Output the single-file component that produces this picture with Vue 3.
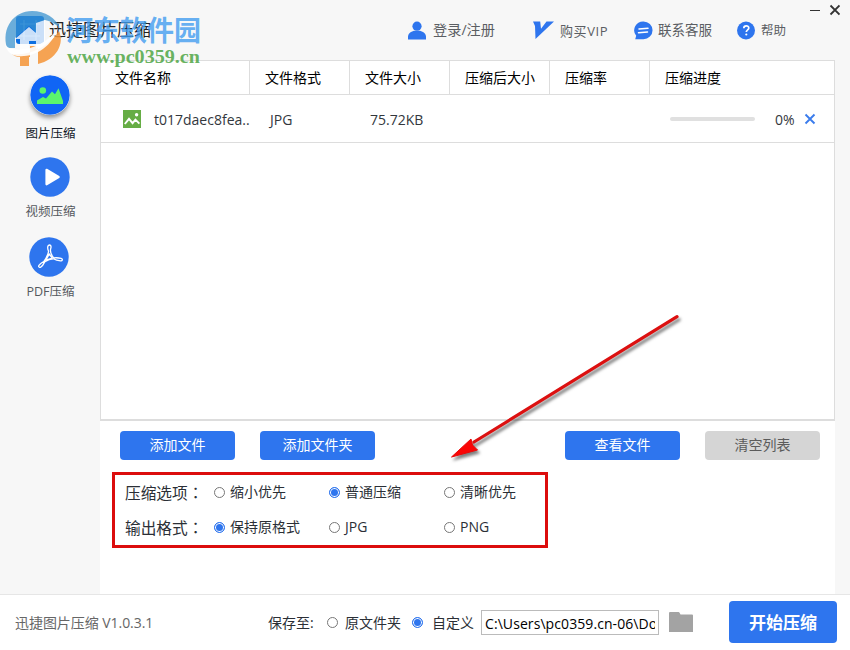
<script setup>
import { ref } from 'vue'

const columns = ['文件名称', '文件格式', '文件大小', '压缩后大小', '压缩率', '压缩进度']

const files = ref([
  { name: 't017daec8fea..', format: 'JPG', size: '75.72KB', result: '', ratio: '', progress: 0 },
])

const levels = ['缩小优先', '普通压缩', '清晰优先']
const formats = ['保持原格式', 'JPG', 'PNG']
const level = ref('普通压缩')
const format = ref('保持原格式')
const saveTo = ref('custom')
const path = ref('C:\\Users\\pc0359.cn-06\\Documents')

const removeFile = (index) => {
  files.value.splice(index, 1)
}

const clearList = () => {
  files.value = []
}
</script>

<template>
  <div class="window">
    <header class="header">
      <div class="brand">
        <svg class="app-logo" width="28" height="28" viewBox="0 0 28 28">
          <rect width="28" height="28" rx="3" fill="#0f6fe0" />
          <path d="M4 8h20M4 20h20M8 4v20M20 4v20" stroke="#4f9df0" stroke-width="1.2" />
        </svg>
        <span class="title">迅捷图片压缩</span>
      </div>
      <nav class="links">
        <a class="link login">
          <svg width="18" height="19" viewBox="0 0 18 19" fill="#2e75ee">
            <circle cx="9" cy="5.200" r="4.600" />
            <path d="M0 18.500v-2.500c0-3.500 2.500-5 6-6.200h6c3.500 1.200 6 2.700 6 6.200v2.500z" />
          </svg>
          <span>登录/注册</span>
        </a>
        <a class="link vip">
          <svg width="21" height="19" viewBox="0 0 21 19" fill="#2e75ee">
            <path d="M0 .5h7.200l.8 7.300L13.500.5H21L2.500 18 2 5z" />
          </svg>
          <span>购买VIP</span>
        </a>
        <a class="link service">
          <svg width="19" height="19" viewBox="0 0 19 19">
            <path d="M9.500.5a9 8.800 0 1 1 0 17.700H1.200l1-3.400A9 8.800 0 0 1 9.500.5z" fill="#2e75ee" />
            <path d="M5 8l9-.8M4.500 11.800l9-.8" stroke="#fff" stroke-width="1.500" stroke-linecap="round" />
          </svg>
          <span>联系客服</span>
        </a>
        <a class="link help">
          <svg width="19" height="19" viewBox="0 0 19 19">
            <circle cx="9" cy="9.500" r="9" fill="#2e75ee" />
            <path d="M6.800 7.300c0-3.200 5-3.200 5-.2 0 1.800-2.500 1.900-2.500 4" fill="none" stroke="#fff" stroke-width="1.700" />
            <circle cx="9.300" cy="13.500" r="1.100" fill="#fff" />
          </svg>
          <span>帮助</span>
        </a>
      </nav>
      <div class="controls">
        <svg width="30" height="12" viewBox="0 0 30 12" stroke="#333" fill="none">
          <path d="M0 6.500h10" stroke-width="1" />
          <path d="M20.500 1.500l9 9M29.500 1.500l-9 9" stroke-width="1.800" />
        </svg>
      </div>
    </header>

    <div class="body">
      <aside class="sidebar">
        <a class="tool active">
          <svg width="40" height="40" viewBox="0 0 40 40">
            <circle cx="20" cy="20" r="19.700" fill="#1065f5" />
            <circle cx="12.800" cy="15.500" r="3.300" fill="#5bf56d" />
            <path d="M7 29v-3.500l6-3.500 3 1.500 6-7 3 2.800 3.500-6L33 26v3z" fill="#5bf56d" />
          </svg>
          <span>图片压缩</span>
        </a>
        <a class="tool">
          <svg width="40" height="40" viewBox="0 0 40 40">
            <circle cx="20" cy="20" r="19.700" fill="#2e75ee" />
            <path d="M16.500 12.800v14.500L28.700 20z" fill="#fff" stroke="#fff" stroke-width="2.200" stroke-linejoin="round" />
          </svg>
          <span>视频压缩</span>
        </a>
        <a class="tool pdf">
          <svg width="40" height="40" viewBox="0 0 40 40">
            <circle cx="20" cy="20" r="19.700" fill="#2e75ee" />
            <path
              d="M19.200 8.700c1.900-1.800 3.500.2 2.500 2.900-.8 3 .2 6 3 9.300 2.400-.3 5.200-.1 7.400.5 2.200.9 1.200 2.800-.6 2.400-2.600-.2-5.200-.9-7.200-2-3 .2-5.900 1.300-8.400 2.800-1.200 2.400-2.500 4.500-4.200 5.500-1.800 1-2.800-1-1.200-2.400 1.200-1.200 2.700-2.200 4.300-3 2.300-3.400 4.200-7.200 4.800-10.300-.9-2-1.300-4.200-.4-5.700zM20.300 17l-3.300 6 6.200-1.900z"
              fill="none"
              stroke="#fff"
              stroke-width="1.300"
              stroke-linejoin="round"
            />
          </svg>
          <span>PDF压缩</span>
        </a>
      </aside>

      <main class="main">
        <section class="table">
          <div class="row head">
            <div v-for="column in columns" :key="column" class="cell">{{ column }}</div>
          </div>
          <div v-for="(file, index) in files" :key="file.name" class="row item">
            <div class="cell name">
              <svg width="18" height="18" viewBox="0 0 18 18">
                <rect width="18" height="18" fill="#66ad45" />
                <path d="M1.800 14l4.200-5.200 3.600 4.400 2.800-3.500 4 4" fill="none" stroke="#fff" stroke-width="1.900" />
                <circle cx="13.600" cy="4.700" r="1.700" fill="#fff" />
              </svg>
              <span class="label">{{ file.name }}</span>
            </div>
            <div class="cell"><span class="label">{{ file.format }}</span></div>
            <div class="cell"><span class="label">{{ file.size }}</span></div>
            <div class="cell">{{ file.result }}</div>
            <div class="cell">{{ file.ratio }}</div>
            <div class="cell progress">
              <div class="track"><div class="fill" :style="{ width: file.progress + '%' }"></div></div>
              <span class="label percent">{{ file.progress }}%</span>
              <svg width="12" height="12" viewBox="0 0 12 12" @click="removeFile(index)">
                <path d="M1.500 1.500l9 9M10.500 1.500l-9 9" stroke="#3b7cec" stroke-width="1.900" />
              </svg>
            </div>
          </div>
        </section>

        <div class="buttons">
          <button>添加文件</button>
          <button>添加文件夹</button>
          <button class="view">查看文件</button>
          <button class="clear" @click="clearList">清空列表</button>
        </div>

        <div class="options">
          <div class="option-row">
            <span class="caption">压缩选项<span class="colon">：</span></span>
            <a v-for="item in levels" :key="item" class="choice" @click="level = item">
              <i class="radio" :class="{ on: level === item }"></i><span>{{ item }}</span>
            </a>
          </div>
          <div class="option-row">
            <span class="caption">输出格式<span class="colon">：</span></span>
            <a v-for="item in formats" :key="item" class="choice" @click="format = item">
              <i class="radio" :class="{ on: format === item }"></i><span>{{ item }}</span>
            </a>
          </div>
        </div>
      </main>
    </div>

    <footer class="footer">
      <span class="version">迅捷图片压缩 V1.0.3.1</span>
      <span class="save">保存至:</span>
      <a class="target" @click="saveTo = 'source'">
        <i class="radio" :class="{ on: saveTo === 'source' }"></i>原文件夹
      </a>
      <a class="target custom" @click="saveTo = 'custom'">
        <i class="radio" :class="{ on: saveTo === 'custom' }"></i>自定义
      </a>
      <input v-model="path" class="path" type="text" />
      <svg class="folder" width="24" height="20" viewBox="0 0 24 20">
        <path d="M0 1q0-1 1-1h8.500q.8 0 1.200 1l.8 1.500H23q1 0 1 1V20H0z" fill="#a3a3a3" />
      </svg>
      <button class="start">开始压缩</button>
    </footer>

    <!-- site mark over the title bar -->
    <svg class="watermark" width="210" height="72" viewBox="0 0 210 72">
      <path d="M7 48C1 28 14 11 32 11c13 0 24 7 28 17-6-5-10-7-15-8l-9 4v8l-7-6-14 12v10z" fill="#3590cf" fill-opacity="0.72" />
      <path d="M12 54c16 2 36-6 47-23 6 13-3 29-21 33V46h-8v11h-1v9h-9v-9q-5 0-8-3z" fill="#f49436" fill-opacity="0.85" />
      <path d="M5 44c5 10 37 8 53-16-6 19-24 30-41 28-6-1-11-5-12-12z" fill="#fff" fill-opacity="0.9" />
      <path d="M15 39l14-12 7 6V23l9-3v24l-9 5v-8h-7v9l-9 1V39z" fill="#fff" fill-opacity="0.78" />
      <text class="mark-name" x="66" y="40.500" textLength="135" lengthAdjust="spacingAndGlyphs">河东软件园</text>
      <text class="mark-url" x="67" y="63" textLength="133" lengthAdjust="spacingAndGlyphs">www.pc0359.cn</text>
    </svg>

    <!-- highlight frame and pointer -->
    <div class="frame"></div>
    <svg class="arrow" width="250" height="170" viewBox="0 0 250 170">
      <path d="M237 16.700L34 142" stroke="#dc1010" stroke-width="3.200" stroke-linecap="round" />
      <path d="M11.500 157L31 139l1.500 6 5 5z" fill="#fa0505" stroke="#e80909" stroke-width="1" />
    </svg>
  </div>
</template>

<style>
body {
  margin: 0;
  overflow: hidden;
}
</style>

<style scoped>
.window {
  position: relative;
  display: flex;
  flex-direction: column;
  width: 850px;
  height: 650px;
  overflow: hidden;
  background: #f7f7f7;
  color: #2b2f36;
  font-family: "Open Sans", "Noto Sans CJK SC", sans-serif;
  font-size: 14px;
  line-height: 20px;
  white-space: nowrap;
}

button {
  padding: 0;
  border: 0;
  border-radius: 4px;
  background: #2e75ee;
  color: #fff;
  font-family: inherit;
}

svg {
  display: block;
  flex: none;
}

.header {
  display: flex;
  flex: none;
  height: 60px;
}

.brand {
  display: flex;
  align-items: center;
  gap: 5px;
  width: 408px;
  padding-left: 16px;
  box-sizing: border-box;
}

.title {
  font-size: 17px;
  color: #222;
}

.links {
  display: flex;
  flex: none;
  width: 401px;
}

.link {
  display: flex;
  align-items: center;
  gap: 6px;
  color: #5b5e63;
  font-size: 13.5px;
}

.login {
  width: 125px;
  gap: 7px;
  font-size: 14.2px;
}

.vip {
  width: 101px;
  font-size: 13px;
}

.vip span {
  padding-top: 1px;
  letter-spacing: 0.6px;
}

.service {
  width: 103px;
  gap: 5px;
}

.help {
  gap: 5px;
  font-size: 12.5px;
}

.help span {
  padding-top: 1px;
}

.controls {
  padding: 4px 0 0 1px;
}

.body {
  display: flex;
  flex: 1;
  min-height: 0;
}

.sidebar {
  display: flex;
  flex-direction: column;
  width: 100px;
  padding-top: 15px;
  box-sizing: border-box;
}

.tool {
  display: flex;
  flex-direction: column;
  align-items: center;
  gap: 5px;
  height: 81px;
  color: #55595e;
  font-size: 12.5px;
}

.tool span {
  padding-left: 1px;
}

.tool.active {
  gap: 9px;
  height: 82px;
  color: #111827;
}

.tool.active svg {
  border-radius: 50%;
  box-shadow: 0 3px 4px rgba(0, 0, 0, 0.4);
}

.tool.pdf svg {
  margin-left: -2px;
}

.tool.pdf {
  margin-top: -1px;
}

.main {
  display: flex;
  flex-direction: column;
  width: 735px;
  background: #fff;
}

.table {
  height: 361px;
  box-sizing: border-box;
  border: 1px solid #ddd;
  border-bottom: 2px solid #ddd;
}

.row {
  display: grid;
  grid-template-columns: 149px 100px 100px 100px 100px 1fr;
  border-bottom: 1px solid #ddd;
}

.head {
  height: 33px;
  color: #000;
}

.head .cell {
  padding-left: 14px;
  border-right: 1px solid #ddd;
  line-height: 33px;
  font-size: 14px;
}

.head .cell + .cell {
  padding-left: 15px;
}

.head .cell:last-child {
  border-right: 0;
}

.item {
  height: 47px;
  color: #33373d;
}

.item .cell {
  display: flex;
  align-items: center;
  padding-left: 20px;
}

.item .name {
  gap: 13px;
  padding-left: 22px;
}

.label {
  padding-top: 2px;
}

.track {
  width: 85px;
  height: 4px;
  border-radius: 2px;
  background: #e0e0e0;
}

.fill {
  height: 4px;
  border-radius: 2px;
  background: #2e75ee;
}

.percent {
  width: 21px;
  margin: 0 8px 0 20px;
}

.buttons {
  display: flex;
  gap: 25px;
  padding: 10px 15px 0 20px;
}

.buttons button {
  width: 115px;
  height: 29px;
  padding-bottom: 2px;
  font-size: 14px;
  line-height: 27px;
}

.buttons .view {
  margin-left: auto;
}

.buttons .clear {
  background: #d5d5d5;
  color: #5b5b5b;
}

.options {
  padding: 15px 0 0 25px;
}

.option-row {
  display: flex;
  align-items: center;
  height: 35px;
}

.caption {
  width: 89px;
  font-size: 15.7px;
}

.colon {
  font-family: "Noto Sans CJK TC", sans-serif;
}

.choice {
  display: flex;
  align-items: center;
  gap: 5px;
  width: 115px;
}

.choice span {
  padding-bottom: 2px;
}

.radio {
  display: block;
  flex: none;
  width: 11px;
  height: 11px;
  box-sizing: border-box;
  border: 1px solid #777;
  border-radius: 50%;
  background: #fff;
}

.radio.on {
  border-color: #2e75ee;
  background: #2e75ee;
  box-shadow: inset 0 0 0 1px #fff;
}

.footer {
  display: flex;
  align-items: center;
  flex: none;
  height: 56px;
  box-sizing: border-box;
  padding: 0 13px 0 15px;
  border-top: 1px solid #e6e6e6;
  background: #fff;
}

.version {
  width: 253px;
  color: #666;
  letter-spacing: -0.05px;
}

.save {
  width: 59px;
}

.target {
  display: flex;
  align-items: center;
  gap: 7px;
  width: 85px;
}

.target.custom {
  gap: 9px;
  width: 69px;
}

.path {
  width: 178px;
  height: 25px;
  box-sizing: border-box;
  padding: 1px 3px 0;
  border: 1px solid #bbb;
  border-radius: 0;
  outline: 0;
  background: #fff;
  color: #000;
  font-family: inherit;
  font-size: 14px;
  letter-spacing: 0.08px;
}

.folder {
  margin: 0 0 2px 10px;
}

.start {
  width: 108px;
  height: 42px;
  margin: 0 0 2px auto;
  font-size: 17px;
  font-weight: 600;
}

.watermark {
  position: absolute;
  top: 0;
  left: 0;
  pointer-events: none;
}

.mark-name {
  fill: #3f9cf0;
  fill-opacity: 0.8;
  font-family: "Noto Sans CJK SC", sans-serif;
  font-size: 28px;
  font-weight: 700;
}

.mark-url {
  fill: #55a94c;
  fill-opacity: 0.9;
  font-family: "Liberation Serif", serif;
  font-size: 19px;
  font-weight: 700;
}

.frame {
  position: absolute;
  top: 472px;
  left: 112px;
  width: 436px;
  height: 76px;
  box-sizing: border-box;
  border: 3px solid #dc0d0d;
  pointer-events: none;
}

.arrow {
  position: absolute;
  top: 300px;
  left: 440px;
  filter: drop-shadow(2px 3px 1.5px rgba(0, 0, 0, 0.5));
  pointer-events: none;
}
</style>
